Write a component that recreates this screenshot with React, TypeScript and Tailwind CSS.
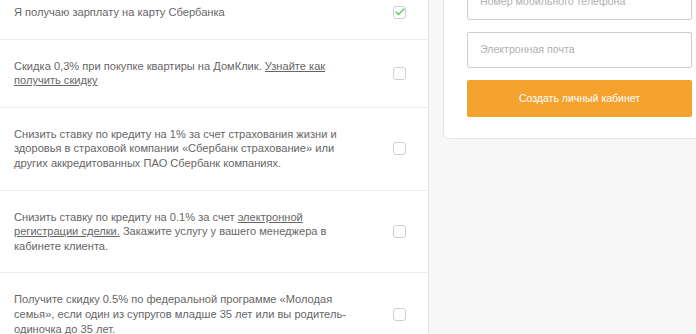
import { Check } from 'lucide-react';

type Row = { text: React.ReactNode; checked?: boolean };

const rows: Row[] = [
    { text: 'Я получаю зарплату на карту Сбербанка', checked: true },
    {
        text: (
            <>
                Скидка 0,3% при покупке квартиры на ДомКлик. <a className="underline">Узнайте как получить скидку</a>
            </>
        ),
    },
    {
        text: 'Снизить ставку по кредиту на 1% за счет страхования жизни и здоровья в страховой компании «Сбербанк страхование» или других аккредитованных ПАО Сбербанк компаниях.',
    },
    {
        text: (
            <>
                Снизить ставку по кредиту на 0.1% за счет <a className="underline">электронной регистрации сделки.</a> Закажите услугу у вашего менеджера в кабинете клиента.
            </>
        ),
    },
    {
        text: 'Получите скидку 0.5% по федеральной программе «Молодая семья», если один из супругов младше 35 лет или вы родитель-одиночка до 35 лет.',
    },
];

function Checkbox({ checked }: { checked?: boolean }) {
    return (
        <div className="relative w-[13px] h-[13px] shrink-0 rounded-[3px] border border-[#cfcfcf] bg-white">
            {checked && (
                <Check className="absolute -top-[1px] left-[0px] w-[12px] h-[12px] text-[#5cc15c]" strokeWidth={2.5} />
            )}
        </div>
    );
}

export default function App() {
    return (
        <div className="h-[334px] w-[696px] overflow-hidden flex bg-[#f7f7f7] font-['Liberation_Sans',Arial,sans-serif]">
            <div className="w-[429px] shrink-0 bg-white border-r border-[#e6e6e6] -mt-[14px]">
                {rows.map((row, i) => (
                    <div key={i} className="flex items-center justify-between pl-[14px] pr-[22px] py-[19px] border-b border-[#ebebeb]">
                        <p className="w-[342px] text-[11.1px] leading-[14.6px] text-[#666]">{row.text}</p>
                        <Checkbox checked={row.checked} />
                    </div>
                ))}
            </div>
            <div className="pl-[14px] -mt-[40px]">
                <div className="w-[274px] bg-white border border-[#e4e4e4] rounded-[6px] pl-[23px] pr-[24px] pt-[23px] pb-[21px] flex flex-col gap-3">
                    <div className="h-[36px] border border-[#cdcdcd] rounded-[2px] flex items-center px-3 text-[10.6px] text-[#b0b0b0]">
                        Номер мобильного телефона
                    </div>
                    <div className="h-[36px] border border-[#cdcdcd] rounded-[2px] flex items-center px-3 text-[10.6px] text-[#b0b0b0]">
                        Электронная почта
                    </div>
                    <button className="h-[37px] rounded-[2px] bg-[#f3a22e] text-white text-[10.5px]">
                        Создать личный кабинет
                    </button>
                </div>
            </div>
        </div>
    );
}
